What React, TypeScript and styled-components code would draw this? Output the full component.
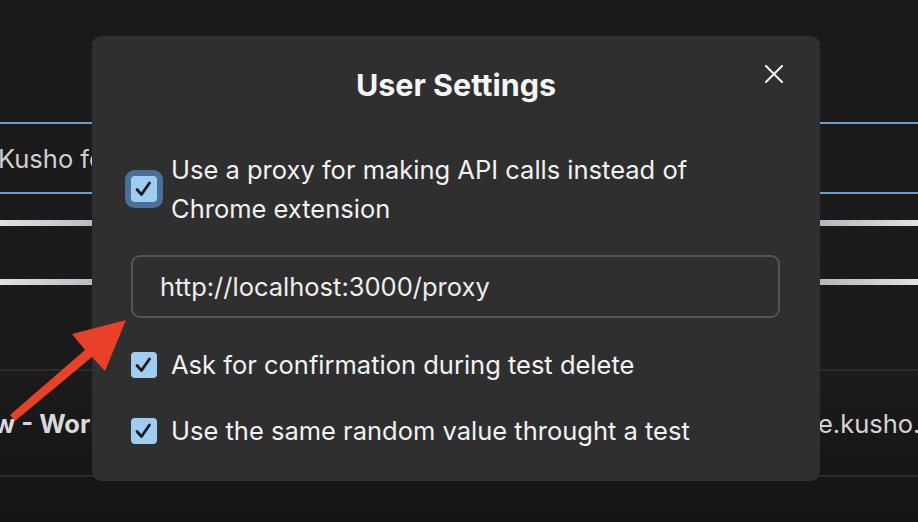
import * as React from "react";
import styled, { createGlobalStyle } from "styled-components";

interface SettingItem {
  label: string;
  checked: boolean;
  focused?: boolean;
}

const GlobalStyle = createGlobalStyle`
  html, body {
    margin: 0;
    padding: 0;
    background: #1b1b1b;
  }
  * {
    box-sizing: border-box;
  }
`;

const settings: SettingItem[] = [
  {
    label: "Use a proxy for making API calls instead of Chrome extension",
    checked: true,
    focused: true,
  },
  { label: "Ask for confirmation during test delete", checked: true },
  { label: "Use the same random value throught a test", checked: true },
];

const App = () => {
  return (
    <>
      <GlobalStyle />
      <Page>
        <Backdrop>
          <SearchBox>
            <SearchText>Kusho for testing your APIs</SearchText>
          </SearchBox>
          <SkeletonBar />
          <SkeletonBar />
          <TableRow>
            <RowTitle>Overview - Workspace</RowTitle>
            <RowLink>e.kusho.ai</RowLink>
          </TableRow>
        </Backdrop>

        <Modal>
          <CloseButton aria-label="close">
            <svg width="18" height="18" viewBox="0 0 18 18">
              <path
                d="M1 1 L17 17 M17 1 L1 17"
                stroke="#f2f2f2"
                strokeWidth="2"
                strokeLinecap="square"
              />
            </svg>
          </CloseButton>
          <Title>User Settings</Title>
          <Body>
            <SettingRow>
              <CheckBox $focused={settings[0].focused}>
                <CheckMark />
              </CheckBox>
              <Label>{settings[0].label}</Label>
            </SettingRow>
            <ProxyInput defaultValue="http://localhost:3000/proxy" />
            {settings.slice(1).map((item) => (
              <SettingRow key={item.label}>
                <CheckBox>
                  <CheckMark />
                </CheckBox>
                <Label>{item.label}</Label>
              </SettingRow>
            ))}
          </Body>
        </Modal>

        <Arrow viewBox="0 0 918 522">
          <polygon
            points="126,320 72,334 85,350 10,415 15,421 92,357 105,371"
            fill="#e8412a"
          />
        </Arrow>
      </Page>
    </>
  );
};

const CheckMark = () => (
  <svg width="26" height="26" viewBox="0 0 26 26">
    <path
      d="M6 13.5 L10.5 18.5 L18.5 7"
      fill="none"
      stroke="#1b1b1b"
      strokeWidth="2.8"
      strokeLinecap="round"
      strokeLinejoin="round"
    />
  </svg>
);

const Page = styled.div`
  position: relative;
  width: 918px;
  height: 522px;
  overflow: hidden;
  font-family: "Inter", "Noto Sans", sans-serif;
  background: linear-gradient(180deg, #1a1a1a 0%, #1b1b1b 70%, #151515 100%);
`;

const Backdrop = styled.div`
  display: flex;
  flex-direction: column;
  padding-top: 122px;
`;

const SearchBox = styled.div`
  height: 72px;
  border-top: 2px solid #6a9fd2;
  border-bottom: 2px solid #6a9fd2;
  display: flex;
  align-items: center;
`;

const SearchText = styled.span`
  margin-left: -2px;
  font-size: 25.5px;
  color: #cfcfcf;
  white-space: nowrap;
`;

const SkeletonBar = styled.div`
  height: 6px;
  margin-top: 26px;
  background: linear-gradient(90deg, #dfe2e5 0%, #b9bdc1 10%, #9a9ea2 50%, #b2b6ba 89%, #e0e2e4 100%);

  & + & {
    margin-top: 53px;
  }
`;

const TableRow = styled.div`
  margin-top: 84px;
  height: 108px;
  border-top: 2px solid #2b2b2b;
  border-bottom: 2px solid #2b2b2b;
  display: grid;
  grid-template-columns: 818px 1fr;
  align-items: center;
  white-space: nowrap;
  overflow: hidden;
`;

const RowTitle = styled.span`
  margin-left: -104px;
  font-size: 25.5px;
  font-weight: 700;
  color: #d9d9d9;
`;

const RowLink = styled.span`
  font-size: 25.5px;
  color: #d4d4d4;
`;

const Arrow = styled.svg`
  position: absolute;
  left: 0;
  top: 0;
  width: 918px;
  height: 522px;
  pointer-events: none;
`;

const Modal = styled.div`
  position: absolute;
  left: 92px;
  top: 36px;
  width: 728px;
  height: 445px;
  background: #2f2f2f;
  border-radius: 9px;
  padding: 29px 39px 0 39px;
  color: #f2f2f2;
`;

const CloseButton = styled.button`
  position: absolute;
  top: 29px;
  right: 37px;
  width: 18px;
  height: 18px;
  padding: 0;
  border: none;
  background: none;
  display: flex;
`;

const Title = styled.h2`
  margin: 0;
  text-align: center;
  font-size: 30.5px;
  line-height: 40px;
  font-weight: 700;
  color: #f5f5f5;
`;

const Body = styled.div`
  display: flex;
  flex-direction: column;
  gap: 27px;
  margin-top: 45px;
`;

const SettingRow = styled.label`
  display: flex;
  align-items: center;
  gap: 14px;
`;

const CheckBox = styled.span<{ $focused?: boolean }>`
  flex: none;
  width: 26px;
  height: 26px;
  border-radius: 4px;
  background: #9fccf1;
  display: flex;
  box-shadow: ${(p) => (p.$focused ? "0 0 0 6px #4b6f99" : "none")};
`;

const Label = styled.span`
  max-width: 560px;
  font-size: 25.5px;
  line-height: 39px;
  color: #f2f2f2;
`;

const ProxyInput = styled.input`
  width: 649px;
  height: 63px;
  border: 2px solid #555555;
  border-radius: 9px;
  background: #2f2f2f;
  padding: 0 27px;
  font-family: "Inter", "Noto Sans", sans-serif;
  font-size: 25.5px;
  color: #eeeeee;
  outline: none;
`;

export default App;
